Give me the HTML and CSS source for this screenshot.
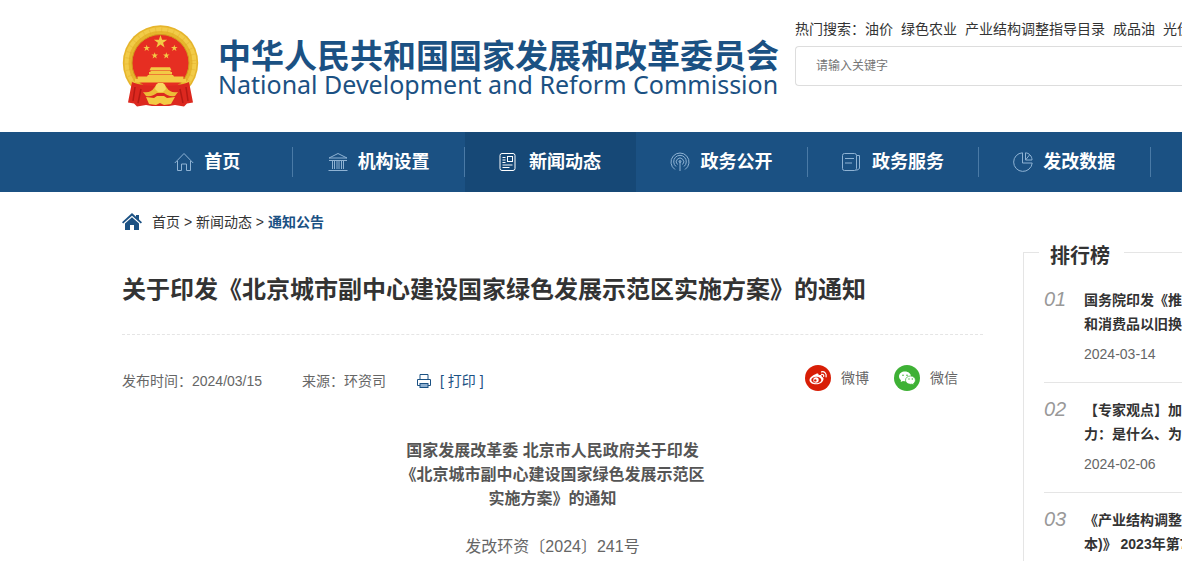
FILE: index.html
```
<!DOCTYPE html>
<html lang="zh-CN">
<head>
    <meta charset="UTF-8">
    <meta name="viewport" content="width=device-width, initial-scale=1.0">
    <title>通知公告</title>
    <link rel="stylesheet" href="styles.css">
</head>
<body>
    <!-- 头部 -->
    <header class="header">
        <a class="logo" href="#">
            <svg class="emblem" viewBox="0 0 78 82" aria-hidden="true">
                <circle cx="38.500" cy="38" r="37.700" fill="#e6b52c"/>
                <circle cx="38.500" cy="38" r="34" fill="none" stroke="#f2cb48" stroke-width="4"/>
                <circle cx="38.500" cy="38" r="33" fill="none" stroke="#d9a322" stroke-width="5" stroke-dasharray="1 5" opacity=".3"/>
                <circle cx="38.500" cy="38" r="28.500" fill="#e62e22" stroke="#d29a1e"/>
                <g fill="#f3ca45">
                    <path d="M38.500 10l1.600 4.700h5l-4 3 1.500 4.800-4.100-2.900-4.100 2.900 1.500-4.800-4-3h5z"/>
                    <path d="M24.700 19.700l.8 2.400H28l-2 1.500.8 2.500-2.100-1.500-2.100 1.500.8-2.500-2-1.500h2.500z"/>
                    <path d="M52.300 19.700l.8 2.400h2.500l-2 1.500.8 2.500-2.100-1.500-2.100 1.500.8-2.500-2-1.500h2.500z"/>
                    <path d="M32.700 27.200l.8 2.400H36l-2 1.500.8 2.500-2.100-1.500-2.100 1.500.8-2.500-2-1.500h2.500z"/>
                    <path d="M44.300 27.200l.8 2.400h2.500l-2 1.500.8 2.500-2.100-1.500-2.100 1.500.8-2.500-2-1.500h2.500z"/>
                    <path d="M29 42.300h19l1.500 3h-22zM28.500 45.800h20V47h1.500v2.500H27V47h1.500zM26 50h25l1 1.500h9.500v2.500H64v3.500H13V54h2.500v-2.500H25z"/>
                </g>
                <path d="M10 57c7 3 16 4 28.500 4S60 60 67 57l4 20.500-6 1-3 3-9-1.500-6 1H30l-6-1-9 1.500-3-3-6-1z" fill="#dc281f"/>
                <path d="M13 62l-2 14M19 64l-3 14M58 64l3 14M64 62l2 14" fill="none" stroke="#b51a14" stroke-width="1.500"/>
                <path d="M21 67c6 1 9-1 11-4l3-4h7l3 4c2 3 5 5 11 4l-3 4c-5 1-8-1-11-3H35c-3 2-6 4-11 3z" fill="#edbd38"/>
                <path d="M34 60l2-2h5l2 2 1 4-3 3h-5l-3-3z" fill="#f8d862"/>
                <path d="M24 72l8 1 3-2h7l3 2 8-1-4 7-7 1-4-2-4 2-7-1z" fill="#f3ca45"/>
            </svg>
            <span class="logo-text">
                <strong class="logo-cn">中华人民共和国国家发展和改革委员会</strong>
                <span class="logo-en">National Development and Reform Commission</span>
            </span>
        </a>
        <div class="search">
            <div class="hot">
                <span>热门搜索：</span>
                <a href="#">油价</a>
                <a href="#">绿色农业</a>
                <a href="#">产业结构调整指导目录</a>
                <a href="#">成品油</a>
                <a href="#">光伏</a>
            </div>
            <input class="search-input" type="text" placeholder="请输入关键字" aria-label="请输入关键字">
        </div>
    </header>

    <!-- 导航 -->
    <nav class="nav">
        <ul class="nav-list">
            <li><a href="#">
                <svg class="nav-icon" viewBox="0 0 20 20"><path d="M.8 11L10 1.500 19.200 11M3.500 9v9.500h4V12h5v6.500h4V9"/></svg>首页</a></li>
            <li><a href="#">
                <svg class="nav-icon" viewBox="0 0 20 20"><path d="M1 6L10 1.500 19 6zM1 8.500h18M4.500 8.500V17M6.500 8.500V17M9 8.500V17M11 8.500V17M13.500 8.500V17M15.500 8.500V17M.5 18.500h19"/></svg>机构设置</a></li>
            <li class="active"><a href="#">
                <svg class="nav-icon" viewBox="0 0 20 20"><rect x="1" y="1.500" width="15" height="17" rx="2"/><path d="M3.500 5.500h3M3.500 8h3M3.500 10.500h3M3.500 13h10M3.500 15.500h7"/><rect x="8.500" y="4.500" width="5" height="5"/></svg>新闻动态</a></li>
            <li><a href="#">
                <svg class="nav-icon" viewBox="0 0 20 20"><path d="M5 17.500a9 9 0 1 1 10 0M6 14.500a6.300 6.300 0 1 1 8 0M7.500 12.500a3.700 3.700 0 1 1 5 0M10 9v10"/><circle cx="10" cy="9.500" r="1"/></svg>政务公开</a></li>
            <li><a href="#">
                <svg class="nav-icon" viewBox="0 0 20 20"><rect x=".5" y="1.500" width="14" height="17" rx="2"/><path d="M3 6.500h9M3 11h7M14.500 3.500h3v13l-3 2"/></svg>政务服务</a></li>
            <li><a href="#">
                <svg class="nav-icon" viewBox="0 0 20 20"><path d="M9.500.8A9.300 9.300 0 1 0 19.200 11H9.500zM12.500.8V8H19c0-4-3-7-6.500-7.200zM12.500 8l4-5"/></svg>发改数据</a></li>
        </ul>
    </nav>

    <div class="crumbs">
        <svg class="home-icon" viewBox="0 0 20 18" aria-hidden="true"><path d="M10 0l4 3.700V2h3v4.500L20 9.300l-1.200 1.300L10 2.800l-8.800 7.800L0 9.300z"/><path d="M3 10.500l7-6.200 7 6.200V17h-5v-5H8v5H3z"/></svg>
        <span><a href="#">首页</a> &gt; <a href="#">新闻动态</a> &gt; <a class="current" href="#">通知公告</a></span>
    </div>

    <div class="main">
        <!-- 正文 -->
        <article class="article">
            <h1>关于印发《北京城市副中心建设国家绿色发展示范区实施方案》的通知</h1>
            <div class="meta">
                <span class="date">发布时间：2024/03/15</span>
                <span class="source">来源：环资司</span>
                <button class="print" type="button">
                    <svg viewBox="0 0 16 16" aria-hidden="true"><path d="M4 6.500V1.500h8v5M4 12.500H1.500v-6h13v6H12"/><rect x="4" y="10.500" width="8" height="4" fill="#8fb0d0"/></svg>
                    [ 打印 ]
                </button>
                <div class="share">
                    <a href="#">
                        <svg viewBox="0 0 26 26" aria-hidden="true"><circle cx="13" cy="13" r="13" fill="#d81e06"/><path d="M11 9c1.500-.8 3-.4 2.600 1.300 2-.8 3.700-.2 3.100 1.500 1.400.5 2 1.400 1.800 2.500-.4 3-3.800 5-7.400 5-3.600 0-6.600-1.700-6.600-4.400C4.500 12.500 8 10 11 9z" fill="#fff"/><ellipse cx="11.300" cy="15" rx="5" ry="3.300" fill="#d81e06"/><circle cx="11" cy="15" r="2.700" fill="#fff"/><circle cx="10.300" cy="15.400" r="1.200" fill="#d81e06"/><path d="M16.500 6.800c3-.5 5.300 1.800 4.600 5M16.500 9.300c1.500-.2 2.500.7 2.200 2.200" fill="none" stroke="#fff" stroke-width="1.200" stroke-linecap="round"/></svg>
                        微博
                    </a>
                    <a href="#">
                        <svg viewBox="0 0 26 26" aria-hidden="true"><circle cx="13" cy="13" r="13" fill="#3eb135"/><path d="M11 6.500c-3.400 0-6 2.100-6 4.900 0 1.500.8 2.800 2 3.700l-.3 2 2.300-1.200c.7.200 1.300.3 2 .3 3.400 0 6-2.100 6-4.800s-2.600-4.900-6-4.900z" fill="#fff"/><path d="M16.500 11c-3 0-5 1.800-5 4.100s2 4.200 5 4.200c.5 0 1-.1 1.500-.2l2 1-.5-1.600c1.200-.8 1.900-2 1.900-3.400 0-2.300-2.100-4.100-4.900-4.100z" fill="#fff" stroke="#3eb135" stroke-width=".7"/><g fill="#3eb135"><circle cx="9" cy="10.300" r=".8"/><circle cx="13" cy="10.300" r=".8"/><circle cx="15" cy="14" r=".7"/><circle cx="18.300" cy="14" r=".7"/></g></svg>
                        微信
                    </a>
                </div>
            </div>
            <div class="content">
                <p class="doc-title">国家发展改革委 北京市人民政府关于印发<br>《北京城市副中心建设国家绿色发展示范区<br>实施方案》的通知</p>
                <p>发改环资〔2024〕241号</p>
            </div>
        </article>

        <!-- 排行榜 -->
        <aside class="rank">
            <h2>排行榜</h2>
            <ol>
                <li>
                    <em>01</em>
                    <div>
                        <a href="#">国务院印发《推<br>和消费品以旧换</a>
                        <time>2024-03-14</time>
                    </div>
                </li>
                <li>
                    <em>02</em>
                    <div>
                        <a href="#">【专家观点】加<br>力：是什么、为</a>
                        <time>2024-02-06</time>
                    </div>
                </li>
                <li>
                    <em>03</em>
                    <div>
                        <a href="#">《产业结构调整<br>本)》 2023年第7</a>
                    </div>
                </li>
            </ol>
        </aside>
    </div>
</body>
</html>
```
FILE: styles.css
```
* {
    box-sizing: border-box;
}
body {
    margin: 0;
    font-family: "Liberation Sans", "Noto Sans CJK SC", sans-serif;
    font-size: 14px;
    line-height: 24px;
    color: #333;
    background: #fff;
    overflow: hidden;
}
a {
    color: inherit;
    text-decoration: none;
}
ul, ol {
    list-style: none;
    margin: 0;
    padding: 0;
}

/* 头部 */
.header {
    display: flex;
    height: 132px;
    padding-left: 122px;
}
.logo {
    display: flex;
    flex: none;
    width: 673px;
    padding-top: 25px;
    color: #1b5183;
}
.emblem {
    width: 78px;
    height: 82px;
    margin-right: 18px;
}
.logo-text {
    padding-top: 15px;
    white-space: nowrap;
}
.logo-cn {
    display: block;
    font-size: 33px;
    line-height: 34px;
}
.logo-en {
    display: block;
    font-family: "Noto Sans", sans-serif;
    font-size: 25px;
    line-height: 20px;
}
.search {
    flex: 1;
    min-width: 0;
    padding-top: 17px;
}
.hot {
    display: flex;
    white-space: nowrap;
    margin-bottom: 5px;
}
.hot a {
    flex: none;
    margin-right: 8px;
}
.search-input {
    display: block;
    width: 100%;
    height: 40px;
    padding: 0 20px;
    border: 1px solid #ddd;
    border-right: 0;
    border-radius: 4px 0 0 4px;
    font-family: inherit;
    font-size: 12px;
}
.search-input::placeholder {
    color: #757575;
}

/* 导航 */
.nav {
    background: #1b5183;
    padding-left: 122px;
    overflow: hidden;
}
.nav-list {
    display: flex;
    width: 1200px;
}
.nav-list li {
    flex: none;
    width: calc(100% / 7);
    padding: 15px 0;
}
.nav-list a {
    display: flex;
    align-items: center;
    justify-content: center;
    gap: 10px;
    height: 30px;
    border-right: 1px solid #4a7aa6;
    color: #fff;
    font-size: 18px;
    font-weight: bold;
}
.nav-list .active {
    background: #164876;
}
.nav-list .active a {
    border-color: transparent;
}
.nav-icon {
    width: 20px;
    height: 20px;
    fill: none;
    stroke: #8fb3d4;
}
.active .nav-icon {
    stroke: #fff;
}

/* 面包屑 */
.crumbs {
    display: flex;
    align-items: center;
    gap: 10px;
    height: 60px;
    padding-left: 122px;
}
.home-icon {
    width: 20px;
    height: 18px;
    fill: #1b5183;
}
.crumbs .current {
    color: #1b5183;
    font-weight: bold;
}

/* 正文 */
.main {
    display: flex;
    padding-left: 122px;
}
.article {
    flex: none;
    width: 861px;
    margin-right: 40px;
}
.article h1 {
    margin: 0;
    padding: 20px 0 26px;
    border-bottom: 1px dashed #e5e5e5;
    font-size: 24px;
    line-height: 36px;
}
.meta {
    display: flex;
    align-items: flex-start;
    padding: 30px 25px 0 0;
    line-height: 32px;
    color: #666;
}
.source {
    margin: 0 30px 0 40px;
}
.print {
    display: flex;
    align-items: center;
    gap: 8px;
    padding: 0;
    border: 0;
    background: none;
    color: #1b5183;
    font-family: inherit;
    font-size: 14px;
    line-height: 32px;
}
.print svg {
    width: 16px;
    height: 16px;
    fill: none;
    stroke: #1b5183;
}
.share {
    display: flex;
    gap: 25px;
    margin-left: auto;
    line-height: 26px;
}
.share a {
    display: flex;
    align-items: center;
    gap: 10px;
}
.share svg {
    width: 26px;
    height: 26px;
}
.content {
    padding-top: 42px;
    font-size: 16px;
    text-align: center;
    color: #666;
}
.content p {
    margin: 0 0 24px;
}
.content .doc-title {
    font-weight: bold;
    color: #555;
}

/* 排行榜 */
.rank {
    flex: 1;
    min-width: 0;
    border: 1px solid #e5e5e5;
    border-width: 1px 0 0 1px;
    white-space: nowrap;
}
.rank h2 {
    width: max-content;
    margin: -12px 0 2px 15px;
    padding: 0 14px 0 11px;
    background: #fff;
    font-size: 20px;
    line-height: 30px;
}
.rank ol {
    padding-left: 20px;
}
.rank li {
    display: flex;
    padding: 15px 0 16px;
    border-bottom: 1px solid #e5e5e5;
}
.rank em {
    flex: none;
    width: 40px;
    font-size: 20px;
    line-height: 22px;
    color: #999;
}
.rank li a {
    display: block;
    font-weight: bold;
}
.rank time {
    display: block;
    margin-top: 6px;
    color: #666;
}
```
